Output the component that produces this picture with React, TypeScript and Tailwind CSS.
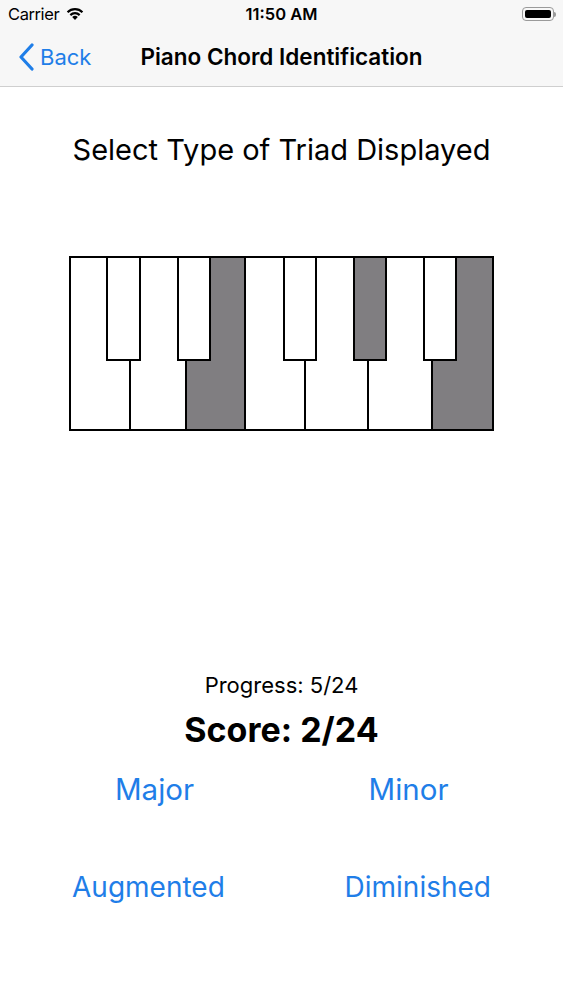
import React from 'react'

const whiteKeys = [
  { w: 'w-[60px]', on: false },
  { w: 'w-[56px]', on: false },
  { w: 'w-[59px]', on: true },
  { w: 'w-[60px]', on: false },
  { w: 'w-[63px]', on: false },
  { w: 'w-[64px]', on: false },
  { w: 'flex-1', on: true },
]

const blackKeys = [
  { pos: 'left-[35px] w-[35px]', on: false },
  { pos: 'left-[106px] w-[34px]', on: false },
  { pos: 'left-[212px] w-[34px]', on: false },
  { pos: 'left-[282px] w-[34px]', on: true },
  { pos: 'left-[352px] w-[34px]', on: false },
]

function Wifi() {
  return (
    <svg width="18" height="13" viewBox="0 0 18 13" className="text-black">
      <path d="M9 13 L6.2 10 A4 4 0 0 1 11.8 10 Z" fill="currentColor" />
      <path d="M3.6 7.3 A7.6 7.6 0 0 1 14.4 7.3 L12.9 8.9 A5.5 5.5 0 0 0 5.1 8.9 Z" fill="currentColor" />
      <path d="M0.8 4.4 A11.6 11.6 0 0 1 17.2 4.4 L15.7 6 A9.5 9.5 0 0 0 2.3 6 Z" fill="currentColor" />
    </svg>
  )
}

function Battery() {
  return (
    <div className="flex items-center">
      <div className="w-[32px] h-[14px] rounded-[4px] border border-[#9a9a9a] p-[2px]">
        <div className="w-full h-full rounded-[2px] bg-black" />
      </div>
      <div className="w-[2px] h-[5px] rounded-r-sm bg-[#9a9a9a]" />
    </div>
  )
}

function Piano() {
  return (
    <div className="relative mx-auto flex w-[425px] h-[175px] border-2 border-black">
      {whiteKeys.map((k, i) => (
        <div
          key={i}
          className={`${k.w} h-full ${i < whiteKeys.length - 1 ? 'border-r-2 border-black' : ''} ${
            k.on ? 'bg-[#807e81]' : 'bg-white'
          }`}
        />
      ))}
      {blackKeys.map((k, i) => (
        <div
          key={i}
          className={`absolute top-[-2px] h-[105px] border-2 border-black ${k.pos} ${
            k.on ? 'bg-[#807e81]' : 'bg-white'
          }`}
        />
      ))}
    </div>
  )
}

export default function App() {
  return (
    <div className="w-[563px] h-[1000px] bg-white font-['Inter','Liberation_Sans',sans-serif] text-black">
      {/* Status + nav */}
      <div className="bg-[#f7f7f7] border-b border-[#cfcfcf] h-[87px]">
        <div className="relative flex items-center h-[28px] px-[8px]">
          <span className="text-[16.5px] tracking-tight">Carrier</span>
          <span className="ml-[7px] mt-[-2px]">
            <Wifi />
          </span>
          <span className="absolute left-0 right-0 text-center text-[16.5px] font-semibold pointer-events-none">
            11:50 AM
          </span>
          <span className="ml-auto mr-[-1px]">
            <Battery />
          </span>
        </div>
        <div className="relative flex items-center h-[58px]">
          <div className="flex items-center pl-[17px] text-[#1f7ee8]">
            <svg width="18" height="28" viewBox="0 0 18 28">
              <path d="M15 2 L4 14 L15 26" fill="none" stroke="currentColor" strokeWidth="3.2" strokeLinecap="round" strokeLinejoin="round" />
            </svg>
            <span className="ml-[5px] text-[22px]">Back</span>
          </div>
          <span className="absolute left-0 right-0 text-center text-[22.5px] font-semibold pointer-events-none">
            Piano Chord Identification
          </span>
        </div>
      </div>

      <h1 className="mt-[46px] text-center text-[29px] leading-[34px]">Select Type of Triad Displayed</h1>

      <div className="mt-[89px]">
        <Piano />
      </div>

      <p className="mt-[241px] text-center text-[22px] leading-[26px]">Progress: 5/24</p>
      <p className="mt-[12px] text-center text-[34px] leading-[40px] font-bold">Score: 2/24</p>

      <div className="mt-[22px] mx-auto flex w-[508px] text-[29.5px] leading-[34px] text-[#1f7ee8]">
        <button className="flex-1 text-center">Major</button>
        <button className="flex-1 text-center">Minor</button>
      </div>
      <div className="mt-[64px] mx-auto flex justify-between w-[419px] text-[28px] leading-[34px] text-[#1f7ee8]">
        <button>Augmented</button>
        <button>Diminished</button>
      </div>
    </div>
  )
}
